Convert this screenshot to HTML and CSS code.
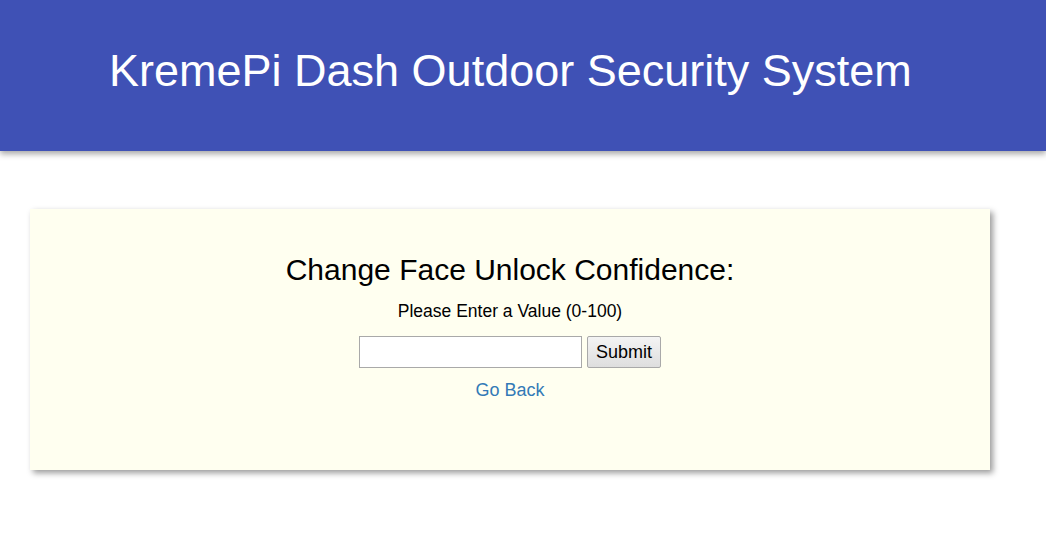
FILE: index.html
```html
<!DOCTYPE html>
<html>
<head>
<meta charset="utf-8">
<link rel="stylesheet" href="styles.css">
</head>
<body>
<header class="topbar">
  <h1 class="title">KremePi Dash Outdoor Security System</h1>
</header>
<main class="content">
  <section class="card">
    <h2 class="card-title">Change Face Unlock Confidence:</h2>
    <p class="card-sub">Please Enter a Value (0-100)</p>
    <form class="form">
      <input class="field" type="text">
      <button class="btn" type="button">Submit</button>
    </form>
    <a class="back" href="#">Go Back</a>
  </section>
</main>
</body>
</html>
```
FILE: styles.css
```css
html, body {
  margin: 0;
  padding: 0;
  background: #ffffff;
  font-family: "Liberation Sans", Arial, sans-serif;
}
.topbar {
  background: #3f51b5;
  height: 151px;
  box-shadow: 0 3px 6px rgba(0,0,0,0.35);
  display: flex;
  align-items: center;
  padding-left: 109px;
  box-sizing: border-box;
}
.title {
  margin: 0;
  color: #ffffff;
  font-weight: normal;
  font-size: 45px;
  line-height: 1;
  position: relative;
  top: -5px;
}
.content {
  padding: 58px 56px 40px 30px;
}
.card {
  width: 960px;
  height: 261px;
  box-sizing: border-box;
  background: #fffff0;
  box-shadow: 3px 3px 6px rgba(0,0,0,0.4);
  display: flex;
  flex-direction: column;
  align-items: center;
  padding-top: 44px;
}
.card-title {
  margin: 0;
  font-weight: normal;
  font-size: 30px;
  line-height: 34px;
  color: #000;
}
.card-sub {
  margin: 14px 0 0;
  font-size: 17.5px;
  line-height: 20px;
  color: #000;
}
.form {
  margin-top: 15px;
  display: flex;
  gap: 5px;
}
.field {
  width: 223px;
  height: 32px;
  box-sizing: border-box;
  border: 1px solid #a9a9a9;
  background: #fff;
  margin: 0;
}
.btn {
  height: 32px;
  width: 74px;
  box-sizing: border-box;
  border: 1px solid #a9a9a9;
  border-radius: 2px;
  background: linear-gradient(#f4f4f4, #dedede);
  font-family: "Liberation Sans", Arial, sans-serif;
  font-size: 18px;
  color: #000;
  padding: 0;
}
.back {
  margin-top: 11px;
  color: #337ab7;
  text-decoration: none;
  font-size: 18px;
  line-height: 22px;
}
```
